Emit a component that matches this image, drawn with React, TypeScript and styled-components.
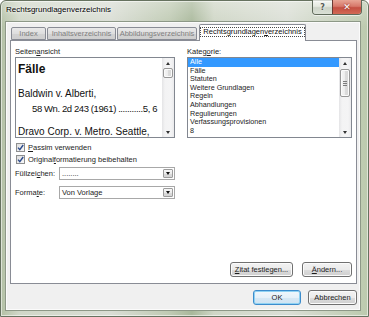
import styled, { createGlobalStyle } from 'styled-components';

const GlobalStyle = createGlobalStyle`
  html, body {
    margin: 0;
    padding: 0;
    background: #ffffff;
  }
  body {
    width: 369px;
    height: 317px;
    overflow: hidden;
    font-family: 'Liberation Sans', Arial, sans-serif;
    color: #1c1c1c;
  }
  * {
    box-sizing: border-box;
  }
`;

const Window = styled.div`
  width: 369px;
  height: 317px;
  display: flex;
  flex-direction: column;
  padding: 0 8px 6px 5px;
  border: 1px solid #66725f;
  border-radius: 6px 6px 0 0;
  box-shadow: inset 0 0 0 1px rgba(255, 255, 255, 0.55);
  background:
    linear-gradient(180deg, rgba(255, 255, 255, 0.3), rgba(255, 255, 255, 0) 26px),
    linear-gradient(
      90deg,
      #b3c1a5 0%,
      #d0d7c8 5%,
      #d9ddd4 30%,
      #bfcab3 46%,
      #a9b89b 52%,
      #cfd6c6 58%,
      #dbdfd6 78%,
      #bccaae 100%
    );
`;

const TitleBar = styled.div`
  height: 21px;
  display: flex;
  align-items: flex-start;
`;

const Title = styled.div`
  padding-top: 4px;
  font-size: 8px;
  line-height: 10px;
  color: #000;
  text-shadow: 0 0 4px #fff, 0 0 2px #fff;
`;

const CaptionGroup = styled.div`
  margin: -1px -2px 0 auto;
  display: flex;
  height: 15px;
  border: 1px solid #5f6a5a;
  border-top: none;
  border-radius: 0 0 4px 4px;
  overflow: hidden;
  box-shadow: 0 1px 0 rgba(255, 255, 255, 0.6);
`;

const CaptionButton = styled.div<{ $close?: boolean }>`
  width: ${({ $close }) => ($close ? '29px' : '19px')};
  display: flex;
  align-items: center;
  justify-content: center;
  font-family: 'DejaVu Sans', sans-serif;
  font-weight: bold;
  font-size: ${({ $close }) => ($close ? '9px' : '8px')};
  color: ${({ $close }) => ($close ? '#fff' : '#555b55')};
  text-shadow: ${({ $close }) => ($close ? '0 0 2px #7a1b10' : '0 0 2px #fff')};
  border-left: ${({ $close }) => ($close ? '1px solid #6b3a33' : 'none')};
  background: ${({ $close }) =>
    $close
      ? 'linear-gradient(180deg, #e8a595 0%, #d7786a 45%, #c44f42 55%, #d26a55 100%)'
      : 'linear-gradient(180deg, rgba(255,255,255,0.7) 0%, rgba(235,238,232,0.6) 45%, rgba(200,207,196,0.7) 55%, rgba(220,226,216,0.8) 100%)'};
`;

const Client = styled.div`
  flex: 1;
  display: flex;
  flex-direction: column;
  background: #f0f0f0;
  border: 1px solid #fbfbfb;
  box-shadow: 0 0 0 1px #8d9887;
  padding: 1px 2px 4px 3px;
`;

const TabStrip = styled.div`
  height: 17px;
  display: flex;
  align-items: flex-end;
  gap: 1px;
  padding-left: 1px;
  margin-bottom: -1px;
  position: relative;
  z-index: 1;
`;

const Tab = styled.div<{ $width: number; $active?: boolean }>`
  width: ${({ $width }) => $width}px;
  height: ${({ $active }) => ($active ? '17px' : '13px')};
  margin-left: ${({ $active }) => ($active ? '1px' : '0')};
  margin-bottom: ${({ $active }) => ($active ? '0' : '1px')};
  display: flex;
  align-items: center;
  justify-content: center;
  font-size: 7.5px;
  color: ${({ $active }) => ($active ? '#111' : '#7f7f7f')};
  border: 1px solid #898c95;
  border-bottom: ${({ $active }) => ($active ? 'none' : '1px solid #898c95')};
  border-radius: 2px 2px 0 0;
  background: ${({ $active }) =>
    $active ? '#ffffff' : 'linear-gradient(180deg, #e9e9e9 0%, #dedede 50%, #d2d2d2 51%, #cfcfcf 100%)'};
  padding-bottom: ${({ $active }) => ($active ? '2px' : '0')};
`;

const FocusLabel = styled.span`
  border: 1px dotted #4a4a4a;
  padding: 0 2px;
  line-height: 8px;
`;

const Key = styled.span`
  text-decoration: underline;
  text-underline-offset: 1px;
`;

const Panel = styled.div`
  height: 244px;
  background: #ffffff;
  border: 1px solid #898c95;
  display: grid;
  grid-template-columns: 160px 165px;
  grid-template-rows: auto 1fr;
  column-gap: 12px;
  padding: 5px 4px 6px 4px;
`;

const Column = styled.div`
  display: flex;
  flex-direction: column;
`;

const FieldLabel = styled.div`
  font-size: 7.5px;
  line-height: 11px;
  height: 11px;
  color: #1c1c1c;
`;

const PreviewBox = styled.div`
  height: 81px;
  display: flex;
  border: 1px solid #828790;
  background: #fff;
  overflow: hidden;
`;

const PreviewText = styled.div`
  flex: 1;
  min-width: 0;
  padding: 4px 0 0 2px;
  overflow: hidden;
  font-size: 10px;
  color: #111;
`;

const PreviewHeading = styled.div`
  font-size: 12px;
  font-weight: bold;
  line-height: 14px;
`;

const Entry = styled.div<{ $gap: number }>`
  margin-top: ${({ $gap }) => $gap}px;
  line-height: 15px;
  white-space: nowrap;
`;

const EntryDetail = styled.div`
  padding-left: 14px;
  font-size: 9.5px;
  letter-spacing: -0.4px;
`;

const ScrollBar = styled.div`
  width: 12px;
  flex-shrink: 0;
  display: flex;
  flex-direction: column;
  background: linear-gradient(90deg, #e4e4e6 0%, #f3f3f4 25%, #f4f4f5 75%, #eaeaec 100%);
`;

const Arrow = styled.div<{ $down?: boolean }>`
  height: 10px;
  display: flex;
  align-items: center;
  justify-content: center;
  &::after {
    content: '';
    border-left: 2.5px solid transparent;
    border-right: 2.5px solid transparent;
    ${({ $down }) => ($down ? 'border-top: 3px solid #333;' : 'border-bottom: 3px solid #333;')}
  }
`;

const Track = styled.div`
  flex: 1;
  display: flex;
  flex-direction: column;
  padding: 0 1px;
`;

const Thumb = styled.div<{ $top: number; $height: number }>`
  margin-top: ${({ $top }) => $top}px;
  height: ${({ $height }) => $height}px;
  border: 1px solid #979797;
  border-radius: 2px;
  background: linear-gradient(90deg, #f6f6f6 0%, #ececec 50%, #dcdcdc 51%, #d8d8d8 100%);
  box-shadow: inset 0 0 0 1px #fbfbfb;
  display: flex;
  align-items: center;
  justify-content: center;
`;

const Grip = styled.div`
  width: 4px;
  height: 5px;
  background: repeating-linear-gradient(180deg, #7c7c7c 0 1px, transparent 1px 2px);
`;

const OptionRow = styled.div<{ $first?: boolean }>`
  display: flex;
  align-items: center;
  height: 12px;
  margin-top: ${({ $first }) => ($first ? '3px' : '0')};
  padding-left: 1px;
  gap: 3px;
  font-size: 7.5px;
`;

const CheckBox = styled.span`
  width: 9px;
  height: 9px;
  border: 1px solid #8e8f8f;
  background: linear-gradient(135deg, #dedede 0%, #f8f8f8 100%);
  display: flex;
  align-items: center;
  justify-content: center;
`;

const SelectRow = styled.div<{ $gap: number }>`
  display: flex;
  align-items: center;
  margin-top: ${({ $gap }) => $gap}px;
  font-size: 7.5px;
`;

const SelectLabel = styled.span`
  width: 44px;
`;

const Combo = styled.div`
  width: 116px;
  height: 13px;
  display: flex;
  border: 1px solid #a8a8a8;
  background: #fff;
`;

const ComboValue = styled.span`
  flex: 1;
  padding-left: 2px;
  line-height: 11px;
`;

const ComboButton = styled.div`
  width: 10px;
  margin: 1px;
  border: 1px solid #9c9c9c;
  border-radius: 1px;
  background: linear-gradient(180deg, #f7f7f7 0%, #ececec 50%, #dcdcdc 51%, #d4d4d4 100%);
  display: flex;
  align-items: center;
  justify-content: center;
  &::after {
    content: '';
    border-left: 2.5px solid transparent;
    border-right: 2.5px solid transparent;
    border-top: 3px solid #111;
  }
`;

const ListBox = styled.div`
  height: 81px;
  display: flex;
  border: 1px solid #828790;
  background: #fff;
  overflow: hidden;
`;

const ListItems = styled.div`
  flex: 1;
  overflow: hidden;
`;

const ListItem = styled.div<{ $selected?: boolean }>`
  height: 8.6px;
  line-height: 8.6px;
  padding-left: 2px;
  font-size: 7.2px;
  white-space: nowrap;
  color: ${({ $selected }) => ($selected ? '#fff' : '#1c1c1c')};
  background: ${({ $selected }) => ($selected ? '#3399ff' : 'transparent')};
`;

const ButtonRow = styled.div<{ $gap: number }>`
  display: flex;
  justify-content: flex-end;
  align-items: flex-end;
  gap: ${({ $gap }) => $gap}px;
`;

const PanelButtons = styled(ButtonRow)`
  grid-column: 1 / span 2;
  align-self: end;
`;

const Footer = styled(ButtonRow)`
  padding-top: 6px;
`;

const Button = styled.div<{ $width: number; $default?: boolean }>`
  width: ${({ $width }) => $width}px;
  height: 15px;
  display: flex;
  align-items: center;
  justify-content: center;
  font-size: 7.5px;
  color: #1c1c1c;
  border: 1px solid ${({ $default }) => ($default ? '#3c8ccc' : '#707070')};
  border-radius: 3px;
  background: ${({ $default }) =>
    $default
      ? 'linear-gradient(180deg, #f0f7fc 0%, #e6f1f9 50%, #d6e8f5 51%, #cfe3f2 100%)'
      : 'linear-gradient(180deg, #f2f2f2 0%, #ebebeb 50%, #dddddd 51%, #cfcfcf 100%)'};
  box-shadow: inset 0 0 0 1px ${({ $default }) => ($default ? '#8fd2f3' : '#fbfbfb')};
`;

const tabs = [
  { label: 'Index', width: 35 },
  { label: 'Inhaltsverzeichnis', width: 69 },
  { label: 'Abbildungsverzeichnis', width: 80 },
];

const categories = [
  'Alle',
  'Fälle',
  'Statuten',
  'Weitere Grundlagen',
  'Regeln',
  'Abhandlungen',
  'Regulierungen',
  'Verfassungsprovisionen',
  '8',
];

const Check = () => (
  <CheckBox>
    <svg width="7" height="7" viewBox="0 0 7 7">
      <path d="M1 3.6 L2.8 5.6 L6.2 1" stroke="#2b4a8c" strokeWidth="1.4" fill="none" />
    </svg>
  </CheckBox>
);

const VScroll = ({ top, height, grip }: { top: number; height: number; grip?: boolean }) => (
  <ScrollBar>
    <Arrow />
    <Track>
      <Thumb $top={top} $height={height}>
        {grip && <Grip />}
      </Thumb>
    </Track>
    <Arrow $down />
  </ScrollBar>
);

export default function App() {
  return (
    <>
      <GlobalStyle />
      <Window>
        <TitleBar>
          <Title>Rechtsgrundlagenverzeichnis</Title>
          <CaptionGroup>
            <CaptionButton>?</CaptionButton>
            <CaptionButton $close>✕</CaptionButton>
          </CaptionGroup>
        </TitleBar>
        <Client>
          <TabStrip>
            {tabs.map((t) => (
              <Tab key={t.label} $width={t.width}>
                {t.label}
              </Tab>
            ))}
            <Tab $width={107} $active>
              <FocusLabel>
                Rechtsgrundlagen<Key>v</Key>erzeichnis
              </FocusLabel>
            </Tab>
          </TabStrip>
          <Panel>
            <Column>
              <FieldLabel>
                Seiten<Key>a</Key>nsicht
              </FieldLabel>
              <PreviewBox>
                <PreviewText>
                  <PreviewHeading>Fälle</PreviewHeading>
                  <Entry $gap={10}>
                    Baldwin v. Alberti,
                    <EntryDetail>58 Wn. 2d 243 (1961) ...........5, 6</EntryDetail>
                  </Entry>
                  <Entry $gap={8}>Dravo Corp. v. Metro. Seattle,</Entry>
                </PreviewText>
                <VScroll top={0} height={10} />
              </PreviewBox>
              <OptionRow $first>
                <Check />
                <span>
                  <Key>P</Key>assim verwenden
                </span>
              </OptionRow>
              <OptionRow>
                <Check />
                <span>
                  Original<Key>f</Key>ormatierung beibehalten
                </span>
              </OptionRow>
              <SelectRow $gap={2}>
                <SelectLabel>
                  Füllzei<Key>c</Key>hen:
                </SelectLabel>
                <Combo>
                  <ComboValue>........</ComboValue>
                  <ComboButton />
                </Combo>
              </SelectRow>
              <SelectRow $gap={6}>
                <SelectLabel>
                  Forma<Key>t</Key>e:
                </SelectLabel>
                <Combo>
                  <ComboValue>Von Vorlage</ComboValue>
                  <ComboButton />
                </Combo>
              </SelectRow>
            </Column>
            <Column>
              <FieldLabel>
                Kateg<Key>o</Key>rie:
              </FieldLabel>
              <ListBox>
                <ListItems>
                  {categories.map((c, i) => (
                    <ListItem key={c} $selected={i === 0}>
                      {c}
                    </ListItem>
                  ))}
                </ListItems>
                <VScroll top={1} height={28} grip />
              </ListBox>
            </Column>
            <PanelButtons $gap={9}>
              <Button $width={63}>
                <span>
                  <Key>Z</Key>itat festlegen...
                </span>
              </Button>
              <Button $width={50}>
                <span>
                  <Key>Ä</Key>ndern...
                </span>
              </Button>
            </PanelButtons>
          </Panel>
          <Footer $gap={7}>
            <Button $width={48} $default>
              OK
            </Button>
            <Button $width={49}>Abbrechen</Button>
          </Footer>
        </Client>
      </Window>
    </>
  );
}
